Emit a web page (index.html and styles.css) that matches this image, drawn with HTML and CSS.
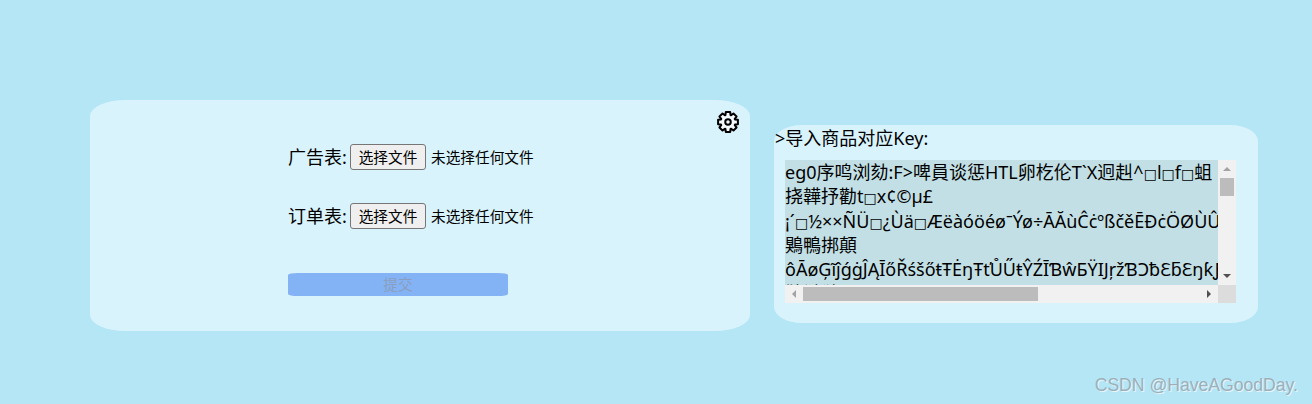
FILE: index.html
```html
<!DOCTYPE html>
<html lang="zh-CN">
<head>
    <meta charset="UTF-8">
    <title>导入</title>
    <link rel="stylesheet" href="styles.css">
</head>
<body>
    <div class="page">
        <div class="upload-panel">
            <svg class="gear" viewBox="0 0 24 24">
                <g transform="translate(12 12)">
                    <polygon points="-2.8,-7.6 -2.4,-10.8 2.4,-10.8 2.8,-7.6 3.39,-7.35 5.94,-9.33 9.33,-5.94 7.35,-3.39 7.6,-2.8 10.8,-2.4 10.8,2.4 7.6,2.8 7.35,3.39 9.33,5.94 5.94,9.33 3.39,7.35 2.8,7.6 2.4,10.8 -2.4,10.8 -2.8,7.6 -3.39,7.35 -5.94,9.33 -9.33,5.94 -7.35,3.39 -7.6,2.8 -10.8,2.4 -10.8,-2.4 -7.6,-2.8 -7.35,-3.39 -9.33,-5.94 -5.94,-9.33 -3.39,-7.35"/>
                    <circle r="3"/>
                </g>
            </svg>
            <div class="file-row">
                <span class="file-label">广告表:</span>
                <button class="file-button">选择文件</button>
                <span class="file-name">未选择任何文件</span>
            </div>
            <div class="file-row">
                <span class="file-label">订单表:</span>
                <button class="file-button">选择文件</button>
                <span class="file-name">未选择任何文件</span>
            </div>
            <button class="submit" disabled>提交</button>
        </div>

        <div class="key-panel">
            <div class="key-title">&gt;导入商品对应Key:</div>
            <div class="key-box">
                <pre class="key-text">eg0序鸣浏劾:F&gt;啤員谈惩HTL卵杚伦T`X迥赳^<span class="tofu">□</span>l<span class="tofu">□</span>f<span class="tofu">□</span>蛆
挠韡抒勸t<span class="tofu">□</span>x¢©µ£
¡´<span class="tofu">□</span>½××ÑÜ<span class="tofu">□</span>¿Ùä<span class="tofu">□</span>ÆëàóöéøˉÝø÷ĀĂùĈċºßčěĒĐċÖØÙÛÜÝÞßàáâãäåæçèéêëìíîïðñòóôõ
鶪鴨挷顛
ôĀøĢĩĵǵġĴĄĪőŘśšőŧŦĖŋŦťŮŰŧŶŹĪƁŵƂŸĲŗžƁƆƀƐƃƐŋƙƑƒƓƔƕƖƗƘƙƚƛƜƝƞƟƠơƢƣƤƥƦƧƨ
鵲鶘鶲</pre>
                <div class="bar-v">
                    <div class="bar-btn"><i class="arrow-up"></i></div>
                    <div class="bar-track"><div class="thumb-v"></div></div>
                    <div class="bar-btn"><i class="arrow-down"></i></div>
                </div>
                <div class="bar-h">
                    <div class="bar-btn"><i class="arrow-left"></i></div>
                    <div class="bar-track"><div class="thumb-h"></div></div>
                    <div class="bar-btn"><i class="arrow-right"></i></div>
                </div>
                <div class="bar-corner"></div>
            </div>
        </div>
    </div>

    <div class="watermark">CSDN @HaveAGoodDay.</div>
</body>
</html>
```

FILE: styles.css
```css
html, body {
    margin: 0;
    padding: 0;
    height: 404px;
    overflow: hidden;
}
body {
    background: #b5e6f6;
    color: #000;
    font-family: "Noto Sans", "Noto Sans CJK SC", sans-serif;
    font-size: 18px;
    position: relative;
}
.page {
    display: flex;
    align-items: flex-start;
    gap: 24px;
    padding: 100px 0 0 90px;
}
.upload-panel {
    position: relative;
    box-sizing: border-box;
    width: 660px;
    height: 231px;
    padding: 44px 0 0 198px;
    background: #d9f3fc;
    border-radius: 35px / 16px;
}
.gear {
    position: absolute;
    top: 11px;
    right: 11px;
    width: 22px;
    height: 22px;
}
.gear polygon, .gear circle {
    fill: #f4fbfe;
    stroke: #000;
    stroke-width: 2.2;
    stroke-linejoin: round;
}
.file-row {
    display: flex;
    align-items: center;
    height: 26px;
    margin-bottom: 33px;
}
.file-label {
    width: 62px;
    padding-bottom: 2px;
}
.file-button {
    box-sizing: border-box;
    width: 76px;
    height: 26px;
    padding: 0 0 2px;
    background: #efefef;
    border: 1px solid #767676;
    border-radius: 3px;
    color: #000;
    font-family: inherit;
    font-size: 14.67px;
}
.file-name {
    margin-left: 5px;
    padding-bottom: 2px;
    font-size: 14.67px;
}
.submit {
    display: block;
    width: 220px;
    height: 23px;
    margin-top: 44px;
    padding: 0 0 2px;
    background: #83b3f5;
    border: none;
    border-radius: 10px / 2px;
    color: #8a9fc0;
    font-family: inherit;
    font-size: 14.67px;
}
.key-panel {
    box-sizing: border-box;
    width: 484px;
    height: 198px;
    margin-top: 25px;
    padding-left: 1px;
    background: #d9f3fc;
    border-radius: 28px / 16px;
}
.key-title {
    height: 24px;
    padding-top: 1px;
    line-height: 25px;
}
.key-box {
    display: grid;
    grid-template-columns: 433px 18px;
    grid-template-rows: 125px 18px;
    width: 451px;
    margin: 10px 0 0 10px;
}
.key-text {
    margin: 0;
    overflow: hidden;
    background: #c2dfe5;
    font-family: inherit;
    font-size: 18px;
    line-height: 24.3px;
}
.tofu {
    font-family: "DejaVu Sans", sans-serif;
    font-size: 14px;
    line-height: 0;
}
.bar-v, .bar-h {
    display: flex;
    background: #f1f1f1;
}
.bar-v {
    flex-direction: column;
}
.bar-btn {
    display: flex;
    flex: none;
    align-items: center;
    justify-content: center;
    width: 18px;
    height: 18px;
}
.bar-track {
    flex: 1;
}
.thumb-v {
    width: 14px;
    height: 18px;
    margin: 0 2px;
    background: #bcbcbc;
}
.thumb-h {
    width: 235px;
    height: 14px;
    margin: 2px 0;
    background: #bcbcbc;
}
.bar-corner {
    background: #dcdcdc;
}
.arrow-up, .arrow-down, .arrow-left, .arrow-right {
    display: block;
    width: 0;
    height: 0;
    border: 4px solid transparent;
}
.arrow-up {
    margin-bottom: 4px;
    border-bottom-color: #a3a3a3;
}
.arrow-down {
    margin-top: 4px;
    border-top-color: #505050;
}
.arrow-left {
    margin-right: 4px;
    border-right-color: #a3a3a3;
}
.arrow-right {
    margin-left: 4px;
    border-left-color: #505050;
}
.watermark {
    position: absolute;
    right: 14px;
    bottom: 9px;
    color: #9db0ba;
    font-family: "Liberation Sans", sans-serif;
    font-size: 17.6px;
    line-height: 20px;
    text-shadow: 1px 1px 0 #e6f5fa;
}
```
